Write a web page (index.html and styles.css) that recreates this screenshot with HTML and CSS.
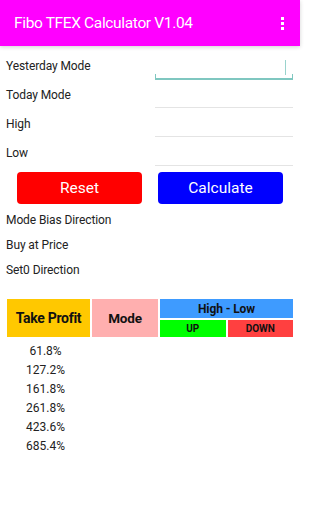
FILE: index.html
```html
<!DOCTYPE html>
<html>
<head>
<meta charset="utf-8">
<link rel="stylesheet" href="styles.css">
</head>
<body>
<header class="appbar">
  <span class="title">Fibo TFEX Calculator V1.04</span>
  <span class="menu"><i></i><i></i><i></i></span>
</header>
<main class="content">
  <div class="form">
    <div class="row"><span class="label">Yesterday Mode</span><span class="field focused"><span class="cursor"></span></span></div>
    <div class="row"><span class="label">Today Mode</span><span class="field"></span></div>
    <div class="row"><span class="label">High</span><span class="field"></span></div>
    <div class="row"><span class="label">Low</span><span class="field"></span></div>
  </div>
  <div class="buttons">
    <button class="btn reset">Reset</button>
    <button class="btn calc">Calculate</button>
  </div>
  <div class="info">
    <div class="info-row">Mode Bias Direction</div>
    <div class="info-row">Buy at Price</div>
    <div class="info-row">Set0 Direction</div>
  </div>
  <div class="table-head">
    <div class="cell tp">Take Profit</div>
    <div class="cell mode">Mode</div>
    <div class="hl">
      <div class="cell hl-top">High - Low</div>
      <div class="hl-bottom">
        <div class="cell up">UP</div>
        <div class="cell down">DOWN</div>
      </div>
    </div>
  </div>
  <div class="levels">
    <div class="level">61.8%</div>
    <div class="level">127.2%</div>
    <div class="level">161.8%</div>
    <div class="level">261.8%</div>
    <div class="level">423.6%</div>
    <div class="level">685.4%</div>
  </div>
</main>
</body>
</html>
```
FILE: styles.css
```css
* { box-sizing: border-box; }
html, body { margin: 0; padding: 0; background: #fff; }
body { font-family: Roboto, "Noto Sans", sans-serif; color: #222; }

.appbar {
  height: 46px;
  width: 300px;
  background: #ff00ff;
  display: flex;
  align-items: center;
  justify-content: space-between;
  padding: 0 16px 0 14px;
  box-shadow: 0 1px 4px rgba(0,0,0,0.18);
  position: relative;
}
.title { color: #fff; font-size: 15.5px; letter-spacing: -0.35px; }
.menu { display: flex; flex-direction: column; gap: 2px; }
.menu i { display: block; width: 3px; height: 3px; background: #fff; }

.content { width: 300px; }

.form { padding-top: 5px; }
.row { display: flex; height: 29px; align-items: stretch; }
.label { width: 155px; padding-left: 6px; font-size: 12px; letter-spacing: -0.1px; display: flex; align-items: center; }
.field {
  width: 138px;
  position: relative;
  border-bottom: 1px solid #e4e4e4;
  margin-bottom: 1px;
}
.field.focused { border-bottom: 2px solid #7fc7c0; margin-bottom: 0; }
.field.focused::before, .field.focused::after {
  content: ""; position: absolute; bottom: 0; width: 1px; height: 4px; background: #7fc7c0;
}
.field.focused::before { left: 0; }
.field.focused::after { right: 0; }
.cursor { position: absolute; right: 7px; top: 9px; width: 1px; height: 15px; background: #9ad3cd; }

.buttons { display: flex; padding: 5px 0 0 17px; gap: 16px; }
.btn {
  width: 125px; height: 32px; border: 0; border-radius: 4px;
  color: #fff; font-family: Roboto, "Noto Sans", sans-serif; font-size: 15.5px; padding: 0;
}
.reset { background: #ff0000; }
.calc { background: #0000ff; }

.info { padding-top: 4px; }
.info-row { height: 25px; line-height: 25px; padding-left: 6px; font-size: 12px; letter-spacing: -0.1px; }

.table-head {
  display: flex; margin: 16px 7px 0 7px; gap: 2px; height: 38px;
}
.cell { display: flex; align-items: center; justify-content: center; font-weight: bold; color: #111; }
.tp { width: 83px; background: #ffc800; font-size: 14px; letter-spacing: -0.3px; }
.mode { width: 66px; background: #ffafaf; font-size: 13.5px; letter-spacing: -0.2px; }
.hl { flex: 1; display: flex; flex-direction: column; gap: 2px; }
.hl-top { height: 19px; background: #3e9bff; font-size: 12px; letter-spacing: -0.1px; }
.hl-bottom { flex: 1; display: flex; gap: 2px; }
.up { flex: 1; background: #00ff00; font-size: 10px; }
.down { flex: 1; background: #ff4040; font-size: 10px; }

.levels { padding-top: 5px; width: 91px; }
.level { height: 19px; line-height: 19px; text-align: center; font-size: 12px; }
```
